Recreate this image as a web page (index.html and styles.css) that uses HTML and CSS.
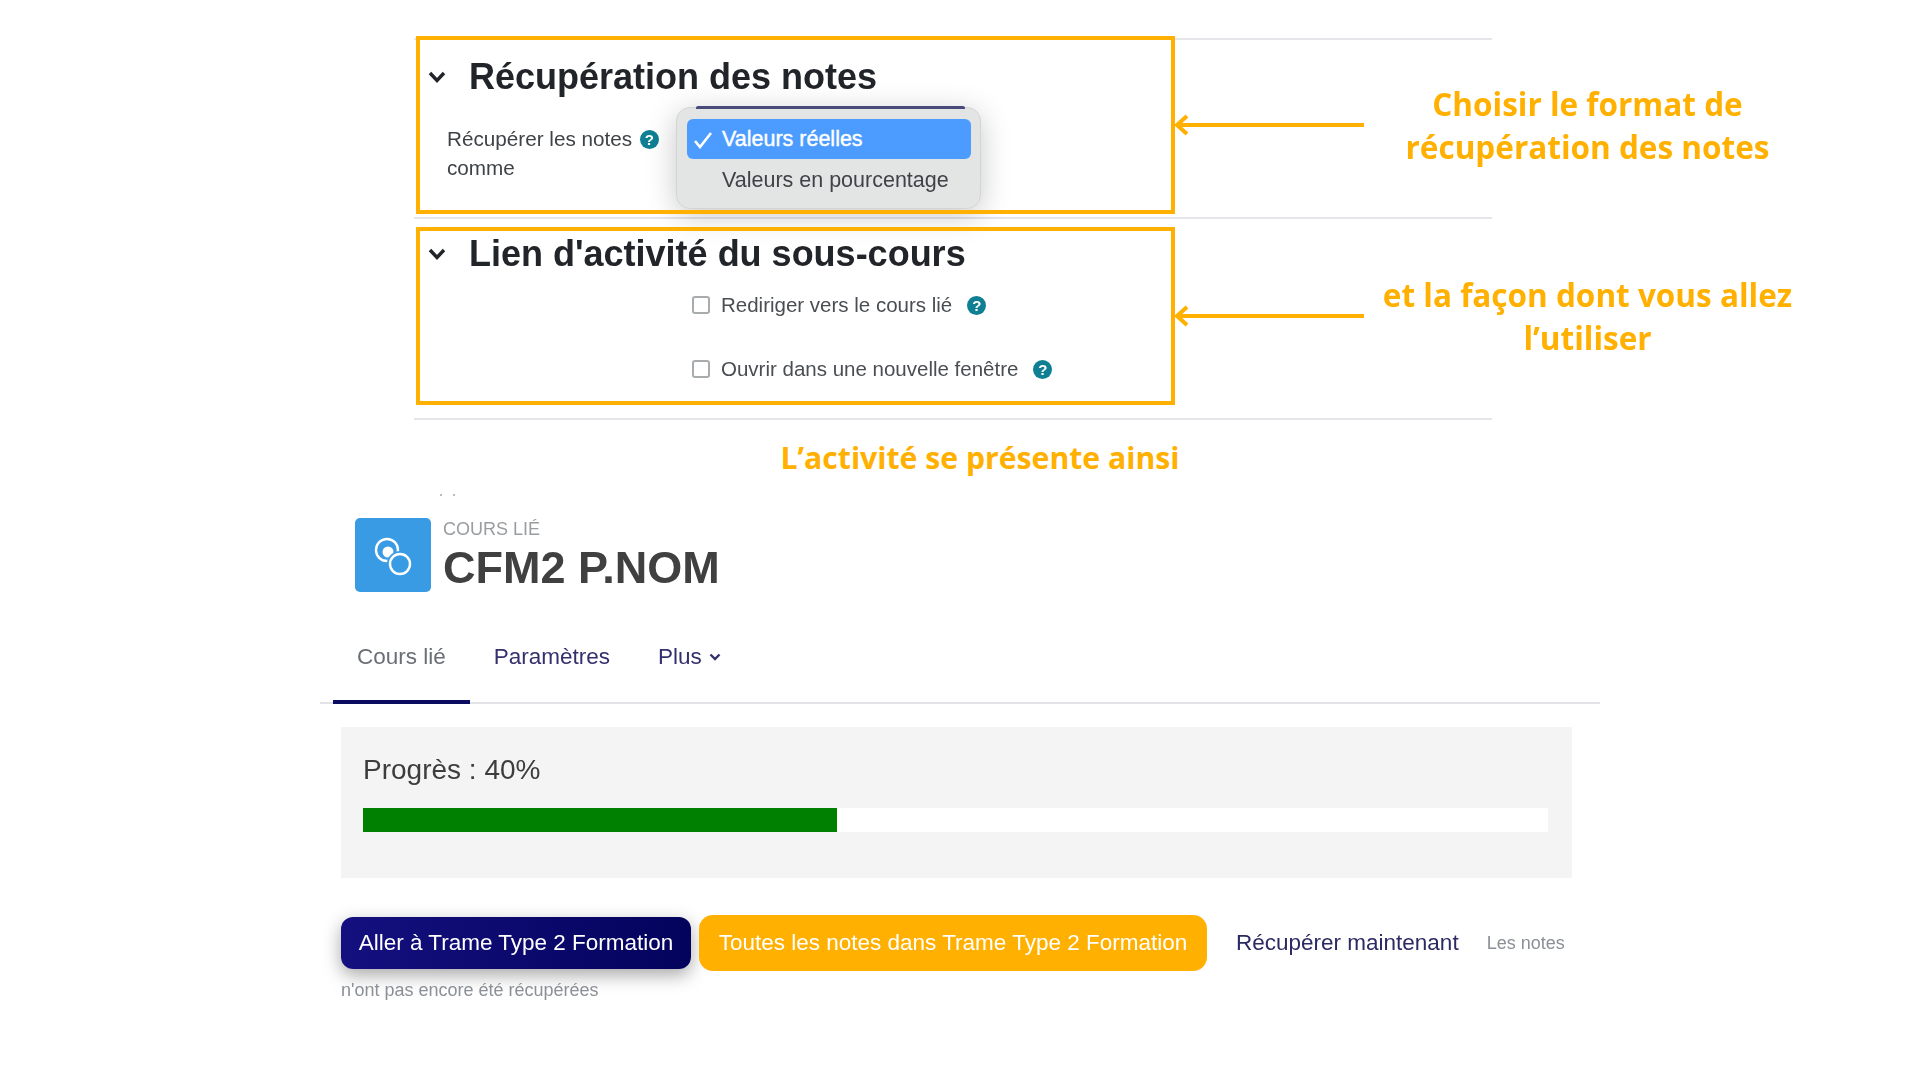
FILE: index.html
```html
<!DOCTYPE html>
<html lang="fr">
<head>
  <meta charset="UTF-8" />
  <title>Sous-cours</title>
  <link rel="stylesheet" href="styles.css">
</head>
<body>
  <div class="slide">

    <!-- Form screenshot -->
    <div class="form">
      <section class="fieldset fieldset-notes">
        <h2 class="legend">
          <svg class="chevron" viewBox="0 0 18 12"><path d="M2 2 L9 9.5 L16 2" /></svg>
          Récupération des notes
        </h2>
        <div class="field">
          <div class="field-label">
            Récupérer les notes
            <span class="help">?</span>
            <br />comme
          </div>
          <div class="select-menu">
            <div class="option option-selected">
              <svg class="tick" viewBox="0 0 20 18"><path d="M2 10 L7 16 L18 2" /></svg>
              Valeurs réelles
            </div>
            <div class="option">Valeurs en pourcentage</div>
          </div>
        </div>
      </section>

      <section class="fieldset fieldset-link">
        <h2 class="legend">
          <svg class="chevron" viewBox="0 0 18 12"><path d="M2 2 L9 9.5 L16 2" /></svg>
          Lien d'activité du sous-cours
        </h2>
        <div class="check-list">
          <label class="check-row"><span class="checkbox"></span>Rediriger vers le cours lié<span class="help">?</span></label>
          <label class="check-row"><span class="checkbox"></span>Ouvrir dans une nouvelle fenêtre<span class="help">?</span></label>
        </div>
      </section>
    </div>

    <h3 class="caption">L’activité se présente ainsi</h3>

    <!-- Activity screenshot -->
    <div class="activity">
      <div class="dots"><i></i><i></i></div>
      <header class="activity-head">
        <div class="activity-icon">
          <svg viewBox="0 0 76 74">
            <circle class="ring" cx="32" cy="32" r="11" />
            <circle class="blob" cx="33" cy="34" r="5.500" />
            <circle class="halo" cx="45" cy="46" r="13" />
            <circle class="ring" cx="45" cy="46" r="10" />
          </svg>
        </div>
        <div>
          <div class="activity-type">COURS LIÉ</div>
          <h1 class="activity-title">CFM2 P.NOM</h1>
        </div>
      </header>

      <nav class="tabs">
        <a class="tab tab-active">Cours lié</a>
        <a class="tab">Paramètres</a>
        <a class="tab">Plus
          <svg class="tab-chevron" viewBox="0 0 12 8"><path d="M1.5 1.5 L6 6 L10.500 1.5" /></svg>
        </a>
      </nav>

      <div class="progress-panel">
        <div class="progress-label">Progrès : 40%</div>
        <div class="progress-track"><div class="progress-fill" style="width: 40%"></div></div>
      </div>

      <div class="actions">
        <a class="btn btn-dark">Aller à Trame Type 2 Formation</a>
        <a class="btn btn-orange">Toutes les notes dans Trame Type 2 Formation</a>
        <a class="btn-link">Récupérer maintenant</a>
        <span class="note">Les notes</span>
      </div>
      <div class="note note-wrap">n'ont pas encore été récupérées</div>
    </div>

    <!-- Annotations over the screenshots -->
    <div class="mark mark-one"></div>
    <div class="mark mark-two"></div>

    <svg class="arrow arrow-one" viewBox="0 0 190 24"><path d="M190 12 H3 M13 3 L3 12 L13 21" /></svg>
    <svg class="arrow arrow-two" viewBox="0 0 190 24"><path d="M190 12 H3 M13 3 L3 12 L13 21" /></svg>

    <p class="callout callout-one">Choisir le format de<br />récupération des notes</p>
    <p class="callout callout-two">et la façon dont vous allez<br />l’utiliser</p>
  </div>
</body>
</html>
```

FILE: styles.css
```css
* { margin: 0; padding: 0; box-sizing: border-box; }
body {
  background: #fff;
  font-family: 'Liberation Sans', Arial, sans-serif;
}
.slide {
  position: relative;
  width: 1920px;
  height: 1080px;
  overflow: hidden;
  padding-top: 38px;
}

/* form, soft like the pasted screenshot */
.form {
  width: 1078px;
  margin-left: 414px;
  border-bottom: 2px solid #e4e6ea;
  filter: blur(0.6px);
}
.fieldset { border-top: 2px solid #e4e6ea; }
.fieldset-notes { height: 179px; }
.fieldset-link { height: 201px; }
.legend {
  display: flex;
  align-items: center;
  gap: 23px;
  padding-left: 14px;
  font-size: 36px;
  line-height: 44px;
  font-weight: bold;
  color: #212529;
}
.fieldset-notes .legend { padding-top: 15px; }
.fieldset-link .legend { padding-top: 13px; }
.chevron { width: 18px; height: 12px; flex: none; }
.chevron path { fill: none; stroke: #212529; stroke-width: 3.4; }

.field { display: flex; padding: 8px 0 0 33px; }
.field-label {
  width: 229px;
  padding-top: 17px;
  font-size: 20.7px;
  line-height: 29px;
  color: #3f4347;
}
.help {
  display: inline-block;
  width: 19px;
  height: 19px;
  margin-left: 4px;
  border-radius: 50%;
  background: #0f7f93;
  color: #fff;
  font-size: 15px;
  line-height: 19px;
  font-weight: bold;
  text-align: center;
}
.field-label .help { margin-left: 2px; vertical-align: 1px; }
.select-menu {
  position: relative;
  width: 305px;
  height: 102px;
  padding: 11px 9px 0 10px;
  background: #e3e5e5;
  border: 1px solid #d3d5d5;
  border-radius: 14px;
  box-shadow: 0 6px 30px rgba(0,0,0,0.22);
  font-size: 21.5px;
}
.select-menu::before {
  content: "";
  position: absolute;
  top: -2px;
  left: 19px;
  right: 15px;
  height: 3px;
  background: #4a4a7a;
  border-radius: 2px 2px 0 0;
}
.option {
  height: 40px;
  line-height: 40px;
  padding-left: 35px;
  color: #3f4347;
}
.option-selected {
  position: relative;
  margin-bottom: 1px;
  background: #4c9cff;
  border-radius: 6px;
  color: #fff;
  -webkit-text-stroke: 0.4px #fff;
}
.tick {
  position: absolute;
  left: 6px;
  top: 12px;
  width: 20px;
  height: 18px;
}
.tick path { fill: none; stroke: #fff; stroke-width: 2.6; }

.check-list {
  display: flex;
  flex-direction: column;
  gap: 34px;
  padding: 14px 0 0 278px;
}
.check-row {
  display: flex;
  align-items: center;
  height: 30px;
  font-size: 20.5px;
  color: #4a4e52;
}
.checkbox {
  width: 18px;
  height: 18px;
  margin-right: 11px;
  background: #fff;
  border: 2px solid #a9acaf;
  border-radius: 3px;
}
.check-row .help { margin-left: 15px; }

/* caption */
.caption {
  margin: 18px 0 0 40px;
  font-family: 'Open Sans', sans-serif;
  font-size: 30.2px;
  line-height: 40px;
  font-weight: bold;
  color: #ffb000;
  text-align: center;
}

/* activity */
.activity {
  width: 1280px;
  margin-left: 320px;
  filter: blur(0.6px);
}
.dots {
  display: flex;
  gap: 11px;
  height: 3px;
  margin: 16px 0 0 120px;
}
.dots i { width: 2px; height: 2px; background: #b9bcc4; }
.activity-head {
  display: flex;
  gap: 12px;
  margin: 20px 0 0 35px;
}
.activity-icon {
  width: 76px;
  height: 74px;
  margin-top: 1px;
  background: #3a9be5;
  border-radius: 5px;
}
.activity-icon svg { display: block; width: 76px; height: 74px; }
.ring { fill: none; stroke: #fff; stroke-width: 2.4; }
.halo { fill: #3a9be5; }
.blob { fill: #fff; }
.activity-type {
  margin-top: 1px;
  font-size: 18px;
  line-height: 22px;
  color: #9a9da0;
}
.activity-title {
  margin-top: 3px;
  font-size: 45px;
  line-height: 50px;
  font-weight: bold;
  color: #404040;
}

.tabs {
  display: flex;
  align-items: stretch;
  height: 111px;
  padding-left: 13px;
  border-bottom: 2px solid #e2e4e8;
}
.tab {
  display: flex;
  align-items: center;
  gap: 7px;
  padding: 20px 24px 0;
  margin-bottom: -2px;
  font-size: 22.5px;
  color: #33306e;
  border-bottom: 4px solid transparent;
}
.tab-active { color: #6a6f75; border-bottom-color: #0b0b5f; }
.tab-chevron { width: 12px; height: 8px; }
.tab-chevron path { fill: none; stroke: #33306e; stroke-width: 2.4; }

.progress-panel {
  width: 1231px;
  height: 151px;
  margin: 23px 0 0 21px;
  padding: 25px 24px 0 22px;
  background: #f4f4f4;
}
.progress-label {
  font-size: 28px;
  line-height: 36px;
  color: #3d3d3d;
}
.progress-track {
  height: 24px;
  margin-top: 20px;
  background: #fff;
}
.progress-fill { height: 100%; background: #008000; }

.actions {
  display: flex;
  align-items: center;
  margin: 37px 0 0 21px;
  font-size: 22.5px;
}
.btn {
  display: block;
  text-align: center;
  color: #fff;
}
.btn-dark {
  width: 350px;
  height: 52px;
  line-height: 52px;
  border-radius: 12px;
  background: linear-gradient(to right, #14107f, #03035c);
  box-shadow: 0 6px 18px rgba(0,0,0,0.35);
}
.btn-orange {
  width: 508px;
  height: 56px;
  line-height: 56px;
  margin-left: 8px;
  border-radius: 14px;
  background: #ffb000;
}
.btn-link { margin-left: 29px; color: #2b2a63; }
.note {
  font-size: 18px;
  color: #8b8f96;
}
.actions .note { margin-left: 28px; }
.note-wrap { margin: 7px 0 0 21px; line-height: 24px; }

/* annotations */
.mark {
  position: absolute;
  left: 416px;
  width: 759px;
  height: 178px;
  border: 4px solid #ffb000;
}
.mark-one { top: 36px; }
.mark-two { top: 227px; }
.arrow {
  position: absolute;
  left: 1174px;
  width: 190px;
  height: 24px;
}
.arrow path { fill: none; stroke: #ffb000; stroke-width: 4; }
.arrow-one { top: 113px; }
.arrow-two { top: 304px; }
.callout {
  position: absolute;
  left: 1340px;
  width: 495px;
  font-family: 'Open Sans', sans-serif;
  font-size: 31.500px;
  line-height: 43px;
  font-weight: bold;
  color: #ffb000;
  text-align: center;
}
.callout-one { top: 82px; }
.callout-two { top: 273px; }
```
